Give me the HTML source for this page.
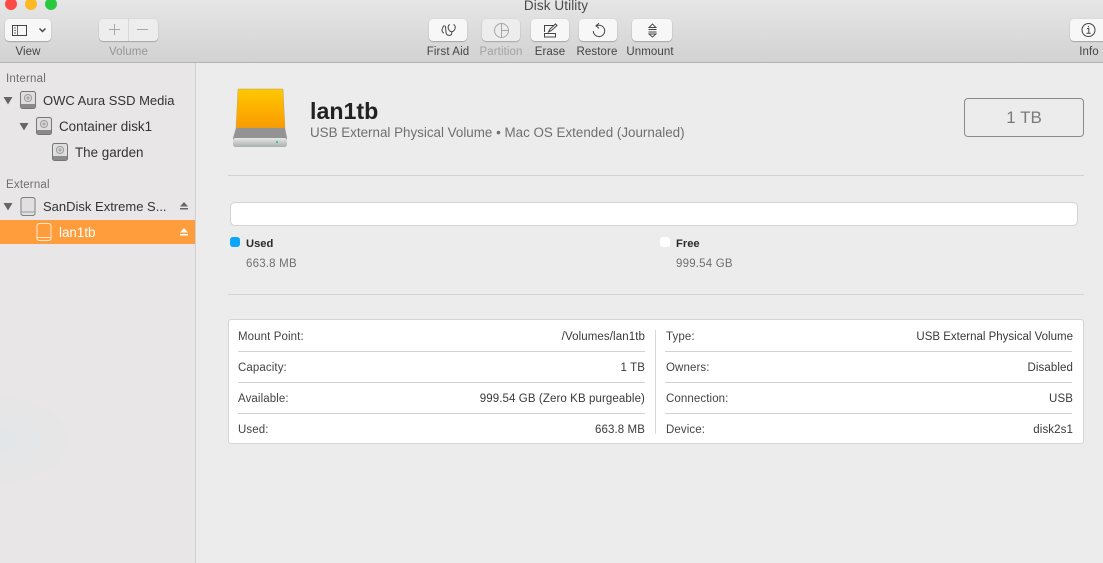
<!DOCTYPE html>
<html><head><meta charset="utf-8"><style>
html,body{margin:0;padding:0}
body{width:1103px;height:563px;overflow:hidden;position:relative;background:#ececec;font-family:"Liberation Sans",sans-serif;color:#3a3a3a}
.t{position:absolute;white-space:nowrap;font-size:11.5px;letter-spacing:.1px;line-height:14px}
.r{text-align:right}
.c{text-align:center}
.abs{position:absolute}
.btn{position:absolute;top:19px;height:22px;background:#f7f7f7;border-radius:4px;box-shadow:0 1px 1px rgba(0,0,0,.22),0 0 1px rgba(0,0,0,.15)}
.btn.dis{background:#ededed}
.lab{position:absolute;top:45px;font-size:11.5px;letter-spacing:.1px;line-height:14px;text-align:center;color:#444;white-space:nowrap}
.hr{position:absolute;height:1px;background:#d2d2d2}
.side{position:absolute;white-space:nowrap;font-size:13.4px;line-height:16px;color:#333}
.sh{position:absolute;font-size:11.5px;letter-spacing:.2px;line-height:14px;color:#6e6e6e}
svg{position:absolute;overflow:visible}
</style></head><body>
<!-- toolbar -->
<div class="abs" style="left:0;top:0;width:1103px;height:62px;background:linear-gradient(#e6e6e6,#d2d2d2)"></div>
<div class="abs" style="left:0;top:62px;width:1103px;height:1px;background:#b3b3b3"></div>
<div class="abs" style="left:5px;top:-2px;width:12px;height:12px;border-radius:50%;background:#fb4a46"></div>
<div class="abs" style="left:25px;top:-2px;width:12px;height:12px;border-radius:50%;background:#fdb924"></div>
<div class="abs" style="left:45px;top:-2px;width:12px;height:12px;border-radius:50%;background:#2ac740"></div>
<div class="t c" style="left:456px;width:200px;top:-2px;font-size:13.5px;line-height:16px;color:#4a4a4a">Disk Utility</div>

<div class="btn" style="left:5px;width:46px"></div>
<svg style="left:0;top:0" width="60" height="45" fill="none" stroke="#444" stroke-width="1">
<rect x="12.500" y="25.500" width="14" height="10"/><path d="M17.500 25.500v10M14 28h2M14 30.500h2M14 33h2" stroke-width=".8"/><path d="M39.500 28.500l3 3 3-3" stroke-width="1.400"/></svg>
<div class="lab" style="left:5px;width:46px">View</div>

<div class="btn dis" style="left:99px;width:59px"></div>
<div class="abs" style="left:128px;top:19px;width:1px;height:22px;background:#d8d8d8"></div>
<svg style="left:0;top:0" width="160" height="45" fill="none" stroke="#a9a9a9" stroke-width="1"><path d="M114.500 24v11M109 29.500h11M137 29.500h11"/></svg>
<div class="lab" style="left:99px;width:59px;color:#959595">Volume</div>

<div class="btn" style="left:429px;width:38px"></div>
<svg style="left:0;top:0" width="470" height="45" fill="none" stroke="#444" stroke-width="1"><path d="M449.800 24.500c-1.500.6-2 2.500-1.500 4 .6 1.700 2 3.200 3.400 3.200s2.900-1.500 3.400-3.200c.4-1.500-.1-3.400-1.500-4"/><path d="M451.700 31.700v1.800c0 2.500-4.800 2.500-5.500 0-.4-1.500-.4-4.500-.6-6.200-.2-1.800-1.900-2-2.500-.5l-1 2.700c-.5 1.500.6 3.200 1.900 3.500"/></svg>
<div class="lab" style="left:420px;width:56px">First Aid</div>

<div class="btn dis" style="left:482px;width:38px"></div>
<svg style="left:0;top:0" width="520" height="45" fill="none" stroke="#a6a6a6" stroke-width="1"><circle cx="501.500" cy="30.500" r="7"/><path d="M501.500 23.500v14M501.500 30.500h7"/></svg>
<div class="lab" style="left:472px;width:58px;color:#a3a3a3">Partition</div>

<div class="btn" style="left:531px;width:38px"></div>
<svg style="left:0;top:0" width="570" height="45" fill="none" stroke="#444" stroke-width="1"><path d="M544.500 32v-6.500h9"/><path d="M544.500 33.500h11v3.500h-11z"/><path d="M548.500 32l1.500-3 5.500-5 1.500 1.500-5.500 5z"/></svg>
<div class="lab" style="left:521px;width:58px">Erase</div>

<div class="btn" style="left:579px;width:38px"></div>
<svg style="left:0;top:0" width="620" height="45" fill="none" stroke="#444" stroke-width="1"><path d="M596.500 25.800a5.700 5.700 0 1 1-3.200 5.200"/><path d="M599 23.200l-3 2.600 3 2.600"/></svg>
<div class="lab" style="left:568px;width:58px">Restore</div>

<div class="btn" style="left:632px;width:40px"></div>
<svg style="left:0;top:0" width="680" height="45" fill="none" stroke="#444" stroke-width=".9"><path d="M649 27.500l3.500-3.500 3.500 3.500zM648.500 29.500h8M648.500 32h8M649 34l3.500 3 3.500-3z"/></svg>
<div class="lab" style="left:621px;width:58px">Unmount</div>

<div class="btn" style="left:1070px;width:40px"></div>
<svg style="left:0;top:0" width="1100" height="45" fill="none" stroke="#444" stroke-width="1"><circle cx="1088.500" cy="30" r="6.500"/><path d="M1087 28.500h1.800v4.500M1086.500 33.300h4.200M1088.500 26v1.300" stroke-width="1"/></svg>
<div class="lab" style="left:1070px;width:38px">Info</div>

<!-- sidebar -->
<div class="abs" style="left:0;top:63px;width:195px;height:500px;background:#e8e6e6"></div>
<div class="abs" style="left:0;top:395px;width:70px;height:90px;background:radial-gradient(ellipse at 0 50%,#e2e6e9,rgba(232,230,230,0) 75%)"></div>
<div class="abs" style="left:195px;top:63px;width:1px;height:500px;background:#cfcfcf"></div>
<div class="sh" style="left:6px;top:72px">Internal</div>
<div class="sh" style="left:6px;top:178px">External</div>

<svg style="left:0;top:0" width="195" height="245">
<path d="M3.500 97h9l-4.500 7.500zM19.500 123h9l-4.500 7.500zM3.500 203h9l-4.500 7.500z" fill="#666"/>
<g fill="#dedede" stroke="#777" stroke-width="1">
<rect x="20.500" y="91.500" width="15" height="17" rx="2"/><rect x="36.500" y="117.500" width="15" height="17" rx="2"/><rect x="52.500" y="143.500" width="15" height="17" rx="2"/>
</g>
<g fill="none" stroke="#999" stroke-width="1"><circle cx="28" cy="98" r="3.500"/><circle cx="44" cy="124" r="3.500"/><circle cx="60" cy="150" r="3.500"/><circle cx="28" cy="98" r="1"/><circle cx="44" cy="124" r="1"/><circle cx="60" cy="150" r="1"/></g>
<path d="M21 104h14v4H21zM37 130h14v4H37zM53 156h14v4H53z" fill="#8a8a8a"/>
<path d="M22.500 197.500h11l1.500 1.500v15l-1.500 1.500h-11L21 214v-15z" fill="#e0e0e0" stroke="#808080"/><path d="M21 212h14" stroke="#999"/>
<path d="M180 206.500h8l-4-4.500zM180 208h8v1.500h-8z" fill="#666"/>
</svg>

<div class="side" style="left:43px;top:93px;font-size:13px">OWC Aura SSD Media</div>
<div class="side" style="left:59px;top:119px">Container disk1</div>
<div class="side" style="left:75px;top:145px">The garden</div>
<div class="side" style="left:43px;top:199px;font-size:13px">SanDisk Extreme S...</div>

<div class="abs" style="left:0;top:220px;width:195px;height:24px;background:#ff9c3c"></div>
<svg style="left:0;top:0" width="195" height="245" fill="none"><path d="M38.500 223.500h11l1.500 1.500v14l-1.500 1.500h-11L37 239v-14z" stroke="#ffe6cc"/><path d="M37 237.500h14" stroke="#ffe6cc"/><path d="M180 232.500h8l-4-4.500zM180 234h8v1.500h-8z" fill="#fff"/></svg>
<div class="side" style="left:59px;top:225px;color:#fff">lan1tb</div>

<!-- header -->
<svg style="left:0;top:0" width="300" height="160">
<defs><linearGradient id="d" x1="0" y1="0" x2="0" y2="1"><stop offset="0" stop-color="#ffc800"/><stop offset="1" stop-color="#fa9a00"/></linearGradient>
<linearGradient id="b" x1="0" y1="0" x2="0" y2="1"><stop offset="0" stop-color="#e6e8e8"/><stop offset="1" stop-color="#a9aeae"/></linearGradient></defs>
<path d="M238 89h45l2 39h-49z" fill="url(#d)" stroke="#b8a468" stroke-width=".5"/>
<path d="M236 128h49l2 10v6a3 3 0 0 1-3 3h-48a3 3 0 0 1-3-3v-6z" fill="#939393"/>
<rect x="233" y="138" width="54" height="9" rx="2.500" fill="url(#b)"/>
<rect x="276" y="141" width="2" height="2" fill="#3ecb6a"/>
</svg>
<div class="t" style="left:310px;top:97px;font-size:23.200px;letter-spacing:0;line-height:28px;font-weight:bold;color:#222">lan1tb</div>
<div class="t" style="left:310px;top:125px;font-size:13.400px;letter-spacing:0;line-height:15px;color:#6f6f6f">USB External Physical Volume • Mac OS Extended (Journaled)</div>
<div class="abs" style="left:964px;top:98px;width:118px;height:37px;border:1px solid #8a8a8a;border-radius:4px;text-align:center;font-size:17px;line-height:37px;color:#7a7a7a">1 TB</div>

<div class="hr" style="left:228px;top:175px;width:856px"></div>
<div class="abs" style="left:230px;top:202px;width:846px;height:22px;background:#fff;border:1px solid #d3d3d3;border-radius:5px"></div>
<div class="abs" style="left:230px;top:237px;width:10px;height:10px;border-radius:3px;background:#0ba5fb"></div>
<div class="t" style="left:246px;top:237px;font-size:11.200px;letter-spacing:0;font-weight:bold;color:#2a2a2a">Used</div>
<div class="t" style="left:246px;top:257px;letter-spacing:.2px;color:#707070">663.8 MB</div>
<div class="abs" style="left:660px;top:237px;width:10px;height:10px;border-radius:3px;background:#fff"></div>
<div class="t" style="left:676px;top:237px;font-size:11.200px;letter-spacing:0;font-weight:bold;color:#2a2a2a">Free</div>
<div class="t" style="left:676px;top:257px;letter-spacing:.2px;color:#707070">999.54 GB</div>
<div class="hr" style="left:228px;top:294px;width:856px"></div>

<!-- table -->
<div class="abs" style="left:228px;top:319px;width:854px;height:123px;background:#fff;border:1px solid #d4d4d4;border-radius:3px"></div>
<div class="abs" style="left:655px;top:330px;width:1px;height:104px;background:#d8d8d8"></div>
<div class="hr" style="left:238px;top:351px;width:407px"></div>
<div class="hr" style="left:238px;top:382px;width:407px"></div>
<div class="hr" style="left:238px;top:413px;width:407px"></div>
<div class="hr" style="left:665px;top:351px;width:407px"></div>
<div class="hr" style="left:665px;top:382px;width:407px"></div>
<div class="hr" style="left:665px;top:413px;width:407px"></div>

<div class="t" style="left:238px;top:330px;color:#444">Mount Point:</div>
<div class="t" style="left:238px;top:361px;color:#444">Capacity:</div>
<div class="t" style="left:238px;top:392px;color:#444">Available:</div>
<div class="t" style="left:238px;top:423px;color:#444">Used:</div>
<div class="t r" style="left:345px;width:300px;top:330px">/Volumes/lan1tb</div>
<div class="t r" style="left:345px;width:300px;top:361px">1 TB</div>
<div class="t r" style="left:345px;width:300px;top:392px">999.54 GB (Zero KB purgeable)</div>
<div class="t r" style="left:345px;width:300px;top:423px">663.8 MB</div>

<div class="t" style="left:666px;top:330px;color:#444">Type:</div>
<div class="t" style="left:666px;top:361px;color:#444">Owners:</div>
<div class="t" style="left:666px;top:392px;color:#444">Connection:</div>
<div class="t" style="left:666px;top:423px;color:#444">Device:</div>
<div class="t r" style="left:773px;width:300px;top:330px;letter-spacing:0">USB External Physical Volume</div>
<div class="t r" style="left:773px;width:300px;top:361px">Disabled</div>
<div class="t r" style="left:773px;width:300px;top:392px">USB</div>
<div class="t r" style="left:773px;width:300px;top:423px">disk2s1</div>
</body></html>
